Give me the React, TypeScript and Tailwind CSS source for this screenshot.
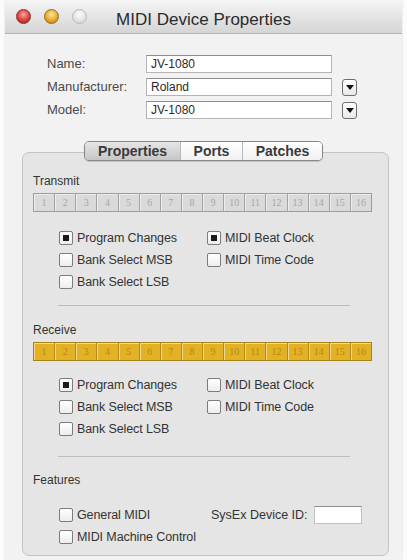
const font = { fontFamily: '"Liberation Sans", Arial, sans-serif' }

const channels = Array.from({ length: 16 }, (_, i) => i + 1)

function TrafficLights() {
  return (
    <div className="flex items-center gap-[13px] pl-[11px]">
      <span className="h-[15px] w-[15px] rounded-full border border-[#8f2a2a] bg-[radial-gradient(circle_at_50%_35%,#f7a4a0,#d8403a_55%,#9a1f1c)]" />
      <span className="h-[15px] w-[15px] rounded-full border border-[#9a6a12] bg-[radial-gradient(circle_at_50%_35%,#fde7a0,#e7a92a_55%,#b07a10)]" />
      <span className="h-[15px] w-[15px] rounded-full border border-[#b8b8b8] bg-[radial-gradient(circle_at_50%_35%,#fbfbfb,#e2e2e2_60%,#cfcfcf)]" />
    </div>
  )
}

function Field({ label, value, dropdown }: { label: string; value: string; dropdown?: boolean }) {
  return (
    <div className="flex h-[18px] items-center">
      <span className="w-[99px] text-[13px] text-[#4a4a4a]">{label}</span>
      <div className="flex h-[18px] w-[186px] items-center border border-[#b5b5b5] border-t-[#8e8e8e] bg-white pl-[4px] text-[12px] text-[#2a2a2a]">
        {value}
      </div>
      {dropdown && (
        <div className="ml-[10px] flex h-[17px] w-[15px] items-center justify-center rounded-[3px] border border-[#6f6f6f] bg-gradient-to-b from-white to-[#e8e8e8]">
          <svg width="8" height="5" viewBox="0 0 8 5">
            <path d="M0 0h8L4 5z" fill="#111" />
          </svg>
        </div>
      )}
    </div>
  )
}

function Check({ label, checked }: { label: string; checked?: boolean }) {
  return (
    <div className="flex h-[22px] items-center gap-[4px]">
      <span className="flex h-[14px] w-[14px] items-center justify-center rounded-[2px] border border-[#7c7c7c] bg-gradient-to-b from-white to-[#ededed]">
        {checked && <span className="h-[6px] w-[6px] bg-[#1a1a1a]" />}
      </span>
      <span className="text-[12.5px] tracking-[-0.1px] text-[#333]">{label}</span>
    </div>
  )
}

function ChannelBar({ active }: { active?: boolean }) {
  return (
    <div
      className={`flex h-[19px] w-[339px] border ${
        active ? 'border-[#a88418] bg-[#e3b124]' : 'border-[#9c9c9c] bg-[#dadada]'
      }`}
    >
      {channels.map((n) => (
        <div
          key={n}
          className={`flex flex-1 items-center justify-center border-l first:border-l-0 text-[10px] shadow-[inset_1px_1px_0_rgba(255,255,255,0.5)] ${
            active ? 'border-[#b08c1e] text-[#b3881a]' : 'border-[#a3a3a3] text-[#a6a6a6]'
          }`}
          style={{ fontFamily: '"Liberation Serif", serif' }}
        >
          {n}
        </div>
      ))}
    </div>
  )
}

function CheckGrid({ beat }: { beat?: boolean }) {
  return (
    <div className="ml-[26px] flex">
      <div className="flex w-[148px] flex-col">
        <Check label="Program Changes" checked />
        <Check label="Bank Select MSB" />
        <Check label="Bank Select LSB" />
      </div>
      <div className="flex flex-col">
        <Check label="MIDI Beat Clock" checked={beat} />
        <Check label="MIDI Time Code" />
      </div>
    </div>
  )
}

function Tabs() {
  return (
    <div className="relative z-10 mx-auto flex h-[20px] w-[239px] overflow-hidden rounded-[5px] border border-[#878787] text-[14px] font-bold text-[#3a3a3a] shadow-[0_1px_1px_rgba(0,0,0,0.15)]">
      <div className="flex w-[95px] items-center justify-center bg-gradient-to-b from-[#e6e6e6] to-[#c6c6c6]">Properties</div>
      <div className="flex w-[62px] items-center justify-center border-l border-[#b9b9b9] bg-gradient-to-b from-white to-[#f1f1f1]">Ports</div>
      <div className="flex flex-1 items-center justify-center border-l border-[#b9b9b9] bg-gradient-to-b from-white to-[#f1f1f1]">Patches</div>
    </div>
  )
}

export default function App() {
  return (
    <div className="flex h-[560px] w-[407px] bg-[#fbfbfb]" style={font}>
      <div className="mx-[5px] flex flex-1 flex-col bg-[#f2f2f2] shadow-[0_0_2px_rgba(0,0,0,0.12)]">
        {/* title bar */}
        <div className="relative flex h-[34px] items-center border-b border-[#b3b3b3] bg-gradient-to-b from-[#f5f5f5] to-[#d5d5d5]">
          <TrafficLights />
          <span className="absolute inset-x-0 top-[7px] text-center text-[17px] text-[#2b2b2b]">MIDI Device Properties</span>
        </div>

        {/* device fields */}
        <div className="flex flex-col gap-[5px] pl-[42px] pt-[21px]">
          <Field label="Name:" value="JV-1080" />
          <Field label="Manufacturer:" value="Roland" dropdown />
          <Field label="Model:" value="JV-1080" dropdown />
        </div>

        <div className="mt-[22px]">
          <Tabs />
        </div>

        <div className="-mt-[9px] ml-[17px] mr-[13px] flex flex-col rounded-[7px] border border-[#c4c4c4] bg-[#e5e5e5] pb-[7px] pl-[10px]">
          <span className="mt-[21px] text-[12px] leading-[14px] text-[#333]">Transmit</span>
          <div className="mt-[5px]">
            <ChannelBar />
          </div>
          <div className="mt-[15px]">
            <CheckGrid beat />
          </div>
          <div className="ml-[25px] mt-[12px] h-px w-[292px] bg-[#bcbcbc]" />

          <span className="mt-[17px] text-[12px] leading-[14px] text-[#333]">Receive</span>
          <div className="mt-[5px]">
            <ChannelBar active />
          </div>
          <div className="mt-[13px]">
            <CheckGrid />
          </div>
          <div className="ml-[25px] mt-[16px] h-px w-[292px] bg-[#bcbcbc]" />

          <span className="mt-[16px] text-[12px] leading-[14px] text-[#333]">Features</span>
          <div className="ml-[26px] mt-[17px] flex flex-col">
            <div className="flex items-center">
              <div className="w-[152px]">
                <Check label="General MIDI" />
              </div>
              <span className="text-[12.5px] text-[#333]">SysEx Device ID:</span>
              <div className="ml-[6px] h-[18px] w-[48px] border border-[#c2c2c2] border-t-[#8e8e8e] bg-white" />
            </div>
            <Check label="MIDI Machine Control" />
          </div>
        </div>
      </div>
    </div>
  )
}
